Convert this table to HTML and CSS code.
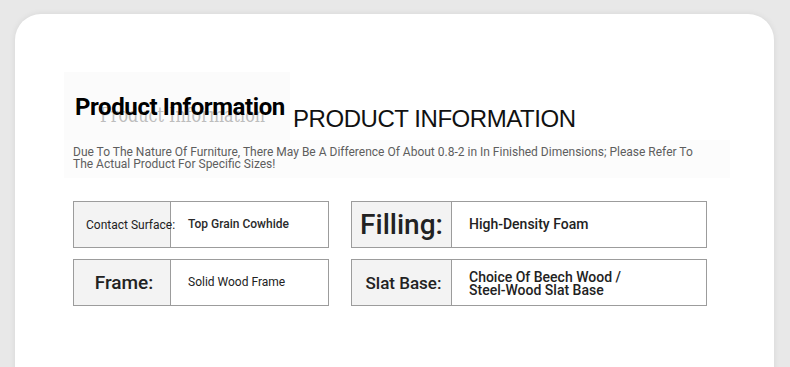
FILE: index.html
```html
<!DOCTYPE html>
<html lang="en">

<head>
    <meta charset="UTF-8">
    <meta name="viewport" content="width=device-width, initial-scale=1.0">
    <title>Product Information</title>
    <link rel="stylesheet" href="styles.css">
</head>

<body>
    <div class="card">
        <div class="heading">
            <div class="heading-badge">
                <span class="heading-ghost">Product Information</span>
                <span class="heading-bold">Product Information</span>
            </div>
            <h1 class="heading-title">PRODUCT INFORMATION</h1>
        </div>

        <div class="notice">
            <p>Due To The Nature Of Furniture, There May Be A Difference Of About 0.8-2 in In Finished Dimensions; Please Refer To<br>The Actual Product For Specific Sizes!</p>
        </div>

        <div class="specs">
            <div class="spec spec-small">
                <div class="spec-label label-start">Contact Surface:</div>
                <div class="spec-value value-medium">Top Grain Cowhide</div>
            </div>
            <div class="spec spec-wide">
                <div class="spec-label label-xl">Filling:</div>
                <div class="spec-value value-lg">High-Density Foam</div>
            </div>
            <div class="spec spec-small">
                <div class="spec-label label-lg">Frame:</div>
                <div class="spec-value">Solid Wood Frame</div>
            </div>
            <div class="spec spec-wide">
                <div class="spec-label label-md">Slat Base:</div>
                <div class="spec-value value-lg value-tight">Choice Of Beech Wood /<br>Steel-Wood Slat Base</div>
            </div>
        </div>
    </div>
</body>

</html>
```

FILE: styles.css
```css
body {
    margin: 0;
    padding: 14px 16px 0 15px;
    background: #e8e8e8;
    font-family: Roboto, "Liberation Sans", sans-serif;
    color: #222;
    overflow: hidden;
}

.card {
    height: 420px;
    background: #fff;
    border-radius: 26px 26px 0 0;
    box-shadow: 0 0 6px rgba(0, 0, 0, 0.08);
    padding: 58px 44px 0 49px;
}

/* title row */
.heading {
    display: flex;
    align-items: flex-start;
}

.heading-badge {
    position: relative;
    width: 215px;
    height: 47px;
    padding: 21px 0 0 11px;
    background: #fbfbfb;
}

.heading-bold {
    position: relative;
    display: block;
    font-size: 24px;
    line-height: 28px;
    font-weight: 700;
    letter-spacing: -0.4px;
    color: #000;
}

/* faint echo of the title under the bold line */
.heading-ghost {
    position: absolute;
    left: 36px;
    top: 34px;
    white-space: nowrap;
    font-family: "DejaVu Serif", serif;
    font-size: 16px;
    line-height: 18px;
    color: #8c8c8c;
    opacity: 0.55;
    transform: scaleY(1.3);
}

.heading-title {
    margin: 33px 0 0 3px;
    font-family: "Liberation Sans", Arial, sans-serif;
    font-size: 24px;
    line-height: 28px;
    font-weight: 400;
    letter-spacing: -0.45px;
    color: #111;
}

/* size note */
.notice {
    width: 657px;
    height: 32px;
    padding: 6px 0 0 9px;
    background: #fcfcfc;
}

.notice p {
    margin: 0;
    font-size: 12px;
    line-height: 12px;
    font-weight: 400;
    white-space: nowrap;
    color: #5e5e5e;
}

/* spec table */
.specs {
    display: grid;
    grid-template-columns: 256px 356px;
    column-gap: 22px;
    row-gap: 11px;
    margin: 23px 0 0 9px;
}

.spec {
    display: flex;
    height: 47px;
    box-sizing: border-box;
    border: 1px solid #9c9c9c;
}

.spec-label {
    display: flex;
    align-items: center;
    justify-content: center;
    flex-shrink: 0;
    white-space: nowrap;
    background: #f3f3f3;
    border-right: 1px solid #9c9c9c;
    color: #222;
}

.spec-small .spec-label {
    width: 96px;
}

.spec-wide .spec-label {
    width: 99px;
}

.label-start {
    justify-content: flex-start;
    padding-left: 12px;
    width: 84px !important;
    font-size: 12px;
}

.label-md {
    font-size: 17px;
    font-weight: 500;
    padding-left: 4px;
    width: 95px !important;
}

.label-lg {
    font-size: 19px;
    font-weight: 500;
    padding-left: 4px;
    width: 92px !important;
}

.label-xl {
    font-size: 28px;
    font-weight: 500;
}

.spec-value {
    display: flex;
    align-items: center;
    padding-left: 17px;
    font-size: 12px;
    line-height: 13px;
    color: #222;
}

.value-medium {
    font-weight: 500;
    color: #2a2a2a;
}

.value-lg {
    font-size: 14px;
    font-weight: 500;
}

.value-tight {
    line-height: 13px;
    padding-top: 2px;
}
```
